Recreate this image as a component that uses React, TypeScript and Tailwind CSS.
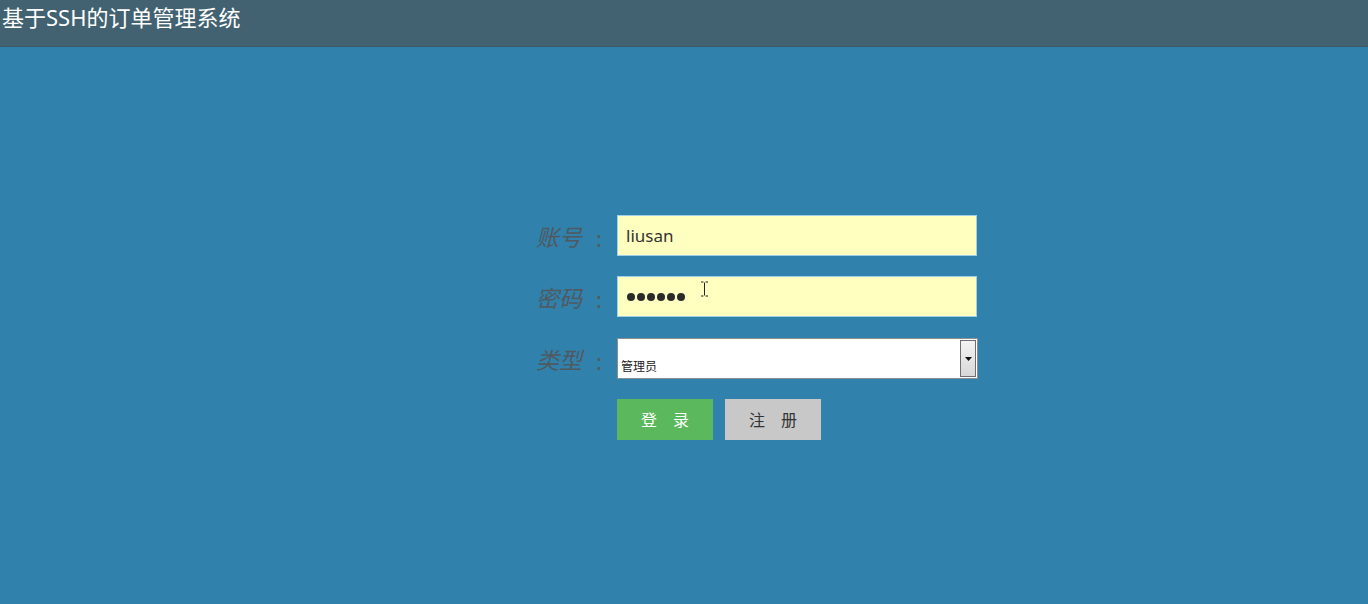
const labelCls =
  'w-[112px] pr-[15px] pt-[4px] flex justify-end items-center italic text-[23px] text-[#4f5a60] leading-none';

const Label = ({ text }: { text: string }) => (
  <span className={labelCls}>
    {text}
    <span className="ml-[14px] not-italic text-[22px]">:</span>
  </span>
);

const App = () => {
  return (
    <div
      className="w-[1368px] h-[604px] bg-[#3181ad] flex flex-col"
      style={{ fontFamily: '"Noto Sans", "Noto Sans CJK SC", sans-serif' }}
    >
      <div className="h-[47px] bg-[#426272] shrink-0 border-b border-[#3a5a6a]">
        <h1 className="pl-[2px] pt-[2px] text-[22px] leading-[30px] text-white">
          基于SSH的订单管理系统
        </h1>
      </div>

      <div className="flex flex-col pl-[505px] pt-[168px] gap-[20px]">
        <div className="flex items-center">
          <Label text="账号" />
          <div className="w-[360px] h-[41px] bg-[#ffffc0] border border-[#9fd0e8] flex items-center px-[8px] text-[17px] text-[#333]">
            liusan
          </div>
        </div>

        <div className="flex items-center">
          <Label text="密码" />
          <div className="relative w-[360px] h-[41px] bg-[#ffffc0] border border-[#9fd0e8] flex items-center pl-[9px] gap-[2px]">
            <span className="w-[8px] h-[8px] rounded-full bg-[#2b2b2b]" />
            <span className="w-[8px] h-[8px] rounded-full bg-[#2b2b2b]" />
            <span className="w-[8px] h-[8px] rounded-full bg-[#2b2b2b]" />
            <span className="w-[8px] h-[8px] rounded-full bg-[#2b2b2b]" />
            <span className="w-[8px] h-[8px] rounded-full bg-[#2b2b2b]" />
            <span className="w-[8px] h-[8px] rounded-full bg-[#2b2b2b]" />
            <svg
              className="absolute left-[82px] top-[4px]"
              width="9"
              height="16"
              viewBox="0 0 9 16"
            >
              <path
                d="M1 1h2.5M5.5 1H8M4.5 1.5v13M1 15h2.5M5.5 15H8"
                stroke="#222"
                strokeWidth="1"
                fill="none"
              />
            </svg>
          </div>
        </div>

        <div className="flex items-center pt-[1px]">
          <Label text="类型" />
          <div className="w-[361px] h-[41px] bg-white border border-[#8a8f94] flex">
            <div className="flex-1 flex items-end pl-[3px] pb-[2px] text-[12px] text-[#222]">
              管理员
            </div>
            <div className="w-[16px] my-[1px] mr-[1px] border border-[#6f6f6f] bg-gradient-to-b from-[#f4f4f4] to-[#d8d8d8] flex items-center justify-center">
              <svg width="7" height="4" viewBox="0 0 7 4">
                <path d="M0 0h7L3.5 4z" fill="#111" />
              </svg>
            </div>
          </div>
        </div>

        <div className="flex items-center pl-[112px] gap-[12px]">
          <button className="w-[96px] h-[41px] bg-[#5cb85c] text-white text-[16px] tracking-[16px] pl-[16px]">
            登录
          </button>
          <button className="w-[96px] h-[41px] bg-[#c8c8c8] text-[#333] text-[16px] tracking-[16px] pl-[16px]">
            注册
          </button>
        </div>
      </div>
    </div>
  );
};

export default App;
